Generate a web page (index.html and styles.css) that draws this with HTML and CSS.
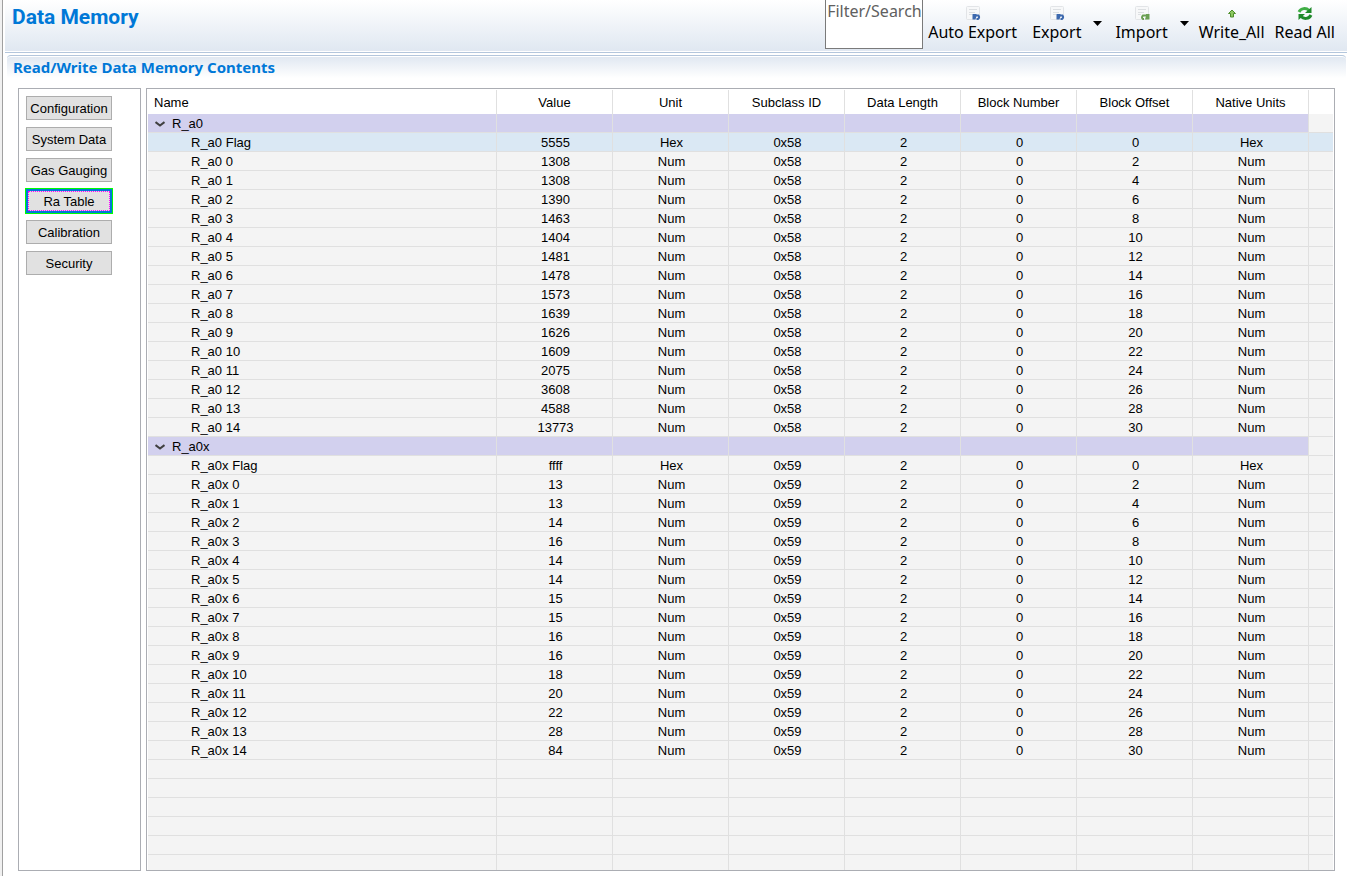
FILE: index.html
```html
<!DOCTYPE html>
<html lang="en">
<head>
    <meta charset="UTF-8">
    <meta name="viewport" content="width=device-width, initial-scale=1.0">
    <title>Data Memory</title>
    <link rel="stylesheet" href="styles.css">
</head>
<body>
    <div class="view">
        <header class="header">
            <h1>Data Memory</h1>
            <div class="toolbar">
                <input type="text" class="search" placeholder="Filter/Search" aria-label="Filter/Search">
                <button type="button" class="tool auto-export">
                    <svg width="16" height="16" viewBox="0 0 16 16">
                        <rect x="1.500" y=".5" width="13" height="13" rx="1" fill="#f7f8f9" stroke="#e2e4e7"/>
                        <path d="M4 3.500h8M4 6.500h6M4 8.500h3" stroke="#dcdfe2"/>
                        <path d="M10 9.500h3.500q1.500 2-.5 3.500h-1.500" fill="none" stroke="#3d69ae" stroke-width="2"/>
                        <path d="M7.500 8l4 0v2l-1 3.500h-3z" fill="#3d69ae"/>
                    </svg>
                    <span>Auto Export</span>
                </button>
                <button type="button" class="tool export">
                    <svg width="16" height="16" viewBox="0 0 16 16">
                        <rect x="1.500" y=".5" width="13" height="13" rx="1" fill="#f7f8f9" stroke="#e2e4e7"/>
                        <path d="M4 3.500h8M4 6.500h6M4 8.500h3" stroke="#dcdfe2"/>
                        <path d="M10 9.500h3.500q1.500 2-.5 3.500h-1.500" fill="none" stroke="#3d69ae" stroke-width="2"/>
                        <path d="M7.500 8l4 0v2l-1 3.500h-3z" fill="#3d69ae"/>
                    </svg>
                    <span>Export</span>
                </button>
                <button type="button" class="drop" aria-label="Export options">
                    <svg width="9" height="5" viewBox="0 0 9 5"><path d="M0 0h9L4.500 5z"/></svg>
                </button>
                <button type="button" class="tool import">
                    <svg width="16" height="16" viewBox="0 0 16 16">
                        <rect x="1.500" y=".5" width="13" height="13" rx="1" fill="#f7f8f9" stroke="#e2e4e7"/>
                        <path d="M4 3.500h8M4 6.500h6M4 8.500h3" stroke="#dcdfe2"/>
                        <path d="M12 9.500H9q-2 2 0 3.500h1" fill="none" stroke="#6a9f52" stroke-width="2"/>
                        <path d="M15.500 8h-3.500v2l-1 3.500h4.500z" fill="#6a9f52"/>
                    </svg>
                    <span>Import</span>
                </button>
                <button type="button" class="drop" aria-label="Import options">
                    <svg width="9" height="5" viewBox="0 0 9 5"><path d="M0 0h9L4.500 5z"/></svg>
                </button>
                <button type="button" class="tool write">
                    <svg width="16" height="16" viewBox="0 0 16 16">
                        <path d="M8 4l3.500 3.500h-2v3.500h-3V7.500h-2z" fill="#8cc860" stroke="#4e8f2c"/>
                    </svg>
                    <span>Write_All</span>
                </button>
                <button type="button" class="tool read">
                    <svg width="16" height="16" viewBox="0 0 16 16">
                        <path d="M2 6C4 2 9 1.500 12 4.500" fill="none" stroke="#3fae45" stroke-width="3"/>
                        <path d="M14.500 1v6h-6.500z" fill="#1f8a2a"/>
                        <path d="M14 9C12 13 7 13.500 4 10.500" fill="none" stroke="#1f8a2a" stroke-width="3"/>
                        <path d="M1.500 14V8H8z" fill="#1f8a2a"/>
                    </svg>
                    <span>Read All</span>
                </button>
            </div>
        </header>

        <main class="section">
            <h2>Read/Write Data Memory Contents</h2>
            <div class="content">
                <nav class="sidebar">
                    <button type="button">Configuration</button>
                    <button type="button">System Data</button>
                    <button type="button">Gas Gauging</button>
                    <button type="button" class="active">Ra Table</button>
                    <button type="button">Calibration</button>
                    <button type="button">Security</button>
                </nav>
                <div class="table-panel">
                    <table>
                        <colgroup>
                            <col class="col-name">
                            <col span="7" class="col-data">
                            <col>
                        </colgroup>
                        <thead>
                            <tr>
                                <th>Name</th>
                                <th>Value</th>
                                <th>Unit</th>
                                <th>Subclass ID</th>
                                <th>Data Length</th>
                                <th>Block Number</th>
                                <th>Block Offset</th>
                                <th>Native Units</th>
                                <td></td>
                            </tr>
                        </thead>
                        <tbody id="rows"></tbody>
                    </table>
                </div>
            </div>
        </main>
    </div>

    <script>
        const groups = [
            {
                name: 'R_a0',
                subclass: '0x58',
                flag: '5555',
                values: [1308, 1308, 1390, 1463, 1404, 1481, 1478, 1573, 1639, 1626, 1609, 2075, 3608, 4588, 13773]
            },
            {
                name: 'R_a0x',
                subclass: '0x59',
                flag: 'ffff',
                values: [13, 13, 14, 16, 14, 14, 15, 15, 16, 16, 18, 20, 22, 28, 84]
            }
        ];
        const emptyRows = 6;
        const rows = document.getElementById('rows');

        function addRow(cells, className) {
            const tr = rows.insertRow();
            tr.className = className;
            for (let i = 0; i < 9; i++) {
                tr.insertCell().textContent = cells[i] ?? '';
            }
            return tr;
        }

        groups.forEach((group, index) => {
            const tr = addRow([], 'group');
            tr.cells[0].innerHTML = '<button type="button" class="toggle">' +
                '<svg width="10" height="6" viewBox="0 0 10 6"><path d="M.5 1L5 4.500 9.500 1"/></svg>' +
                group.name + '</button>';

            addRow([group.name + ' Flag', group.flag, 'Hex', group.subclass, 2, 0, 0, 'Hex'], index === 0 ? 'selected' : '');
            group.values.forEach((value, i) => {
                addRow([group.name + ' ' + i, value, 'Num', group.subclass, 2, 0, (i + 1) * 2, 'Num'], '');
            });
        });

        for (let i = 0; i < emptyRows; i++) {
            addRow([], '');
        }
    </script>
</body>
</html>
```
FILE: styles.css
```css
* {
    margin: 0;
    padding: 0;
    box-sizing: border-box;
}

body {
    font-family: "Liberation Sans", Arial, sans-serif;
    font-size: 13px;
    color: #000;
    background: #f0f0f0;
    padding-left: 2px;
}

button {
    font: inherit;
    color: inherit;
    border: none;
    background: none;
}

.view {
    display: flex;
    flex-direction: column;
    height: 100vh;
    padding-left: 2px;
    background: #fff;
    border-left: 1px solid #a0a0a0;
}

/* Title bar and toolbar */
.header {
    display: flex;
    justify-content: space-between;
    height: 53px;
    flex-shrink: 0;
    background: linear-gradient(#fff, #dfe7f1);
    border-bottom: 1px solid #b3c6dc;
    box-shadow: inset 0 -1px #fff;
}

h1 {
    padding: 4px 7px;
    font-family: Roboto, "Noto Sans", sans-serif;
    font-size: 21px;
    line-height: 26px;
    color: #0078d7;
}

.toolbar {
    display: flex;
    padding-right: 12px;
    font-family: "Noto Sans", sans-serif;
    font-size: 16px;
    line-height: 20px;
}

.search {
    width: 98px;
    height: 49px;
    padding: 0 0 26px 1px;
    font: inherit;
    border: 1px solid #7a7a7a;
    border-top: none;
    background: #fff;
}

.search::placeholder {
    color: #606060;
    opacity: 1;
}

.tool {
    display: flex;
    flex-direction: column;
    align-items: center;
    padding-top: 6px;
    margin-left: 10px;
}

.auto-export {
    margin-left: 5px;
}

.export {
    margin-left: 15px;
}

.drop {
    display: flex;
    margin-left: 12px;
    padding-top: 21px;
}

.import {
    margin-left: 13px;
}

/* Section with side buttons and table */
.section {
    display: flex;
    flex-direction: column;
    flex: 1;
    min-height: 0;
    margin: 2px 1px 0 2px;
    padding: 0 10px 5px;
    background: linear-gradient(#dfe7f1, #fff 22px);
    border-top: 1px solid #b3c6dc;
    border-radius: 4px 4px 0 0;
    box-shadow: inset 0 1px #fff;
}

h2 {
    margin-left: -4px;
    font-family: "Noto Sans", sans-serif;
    font-size: 15px;
    line-height: 22px;
    color: #0078d7;
}

.content {
    display: flex;
    flex: 1;
    min-height: 0;
    gap: 5px;
    padding: 10px 1px 0;
}

.sidebar {
    display: flex;
    flex-direction: column;
    align-items: flex-start;
    gap: 7px;
    width: 123px;
    flex-shrink: 0;
    padding: 7px;
    border: 1px solid #abadb3;
}

.sidebar button {
    width: 86px;
    height: 24px;
    background: #e1e1e1;
    border: 1px solid #adadad;
}

.sidebar .active {
    position: relative;
    border: 2px solid #0078d7;
    outline: 1px solid #00ff00;
}

/* focus rectangle */
.active::after {
    content: "";
    position: absolute;
    inset: 0;
    border: 1px dotted #ff00ff;
}

.table-panel {
    flex: 1;
    padding: 1px;
    overflow: hidden;
    border: 1px solid #abadb3;
}

table {
    width: 100%;
    table-layout: fixed;
    border-spacing: 0;
}

.col-name {
    width: 349px;
}

.col-data {
    width: 116px;
}

th {
    height: 24px;
    font-weight: normal;
    border-right: 1px solid #e0e0e0;
}

th:first-child {
    padding-left: 6px;
    text-align: left;
}

tbody td {
    height: 19px;
    padding: 1px 0 0 2px;
    line-height: 17px;
    text-align: center;
    background: #f4f4f4;
    border-right: 1px solid #e0e0e0;
    border-bottom: 1px solid #e0e0e0;
}

tbody td:first-child {
    padding-left: 43px;
    text-align: left;
}

tbody td:last-child {
    border-right: none;
}

.selected td {
    background: #dae8f4;
}

.group td:not(:last-child) {
    background: #d2d0ee;
}

tbody .group td:first-child {
    padding-left: 7px;
}

.toggle {
    display: flex;
    align-items: center;
    gap: 7px;
}

.toggle path {
    fill: none;
    stroke: #404040;
    stroke-width: 2;
}
```
